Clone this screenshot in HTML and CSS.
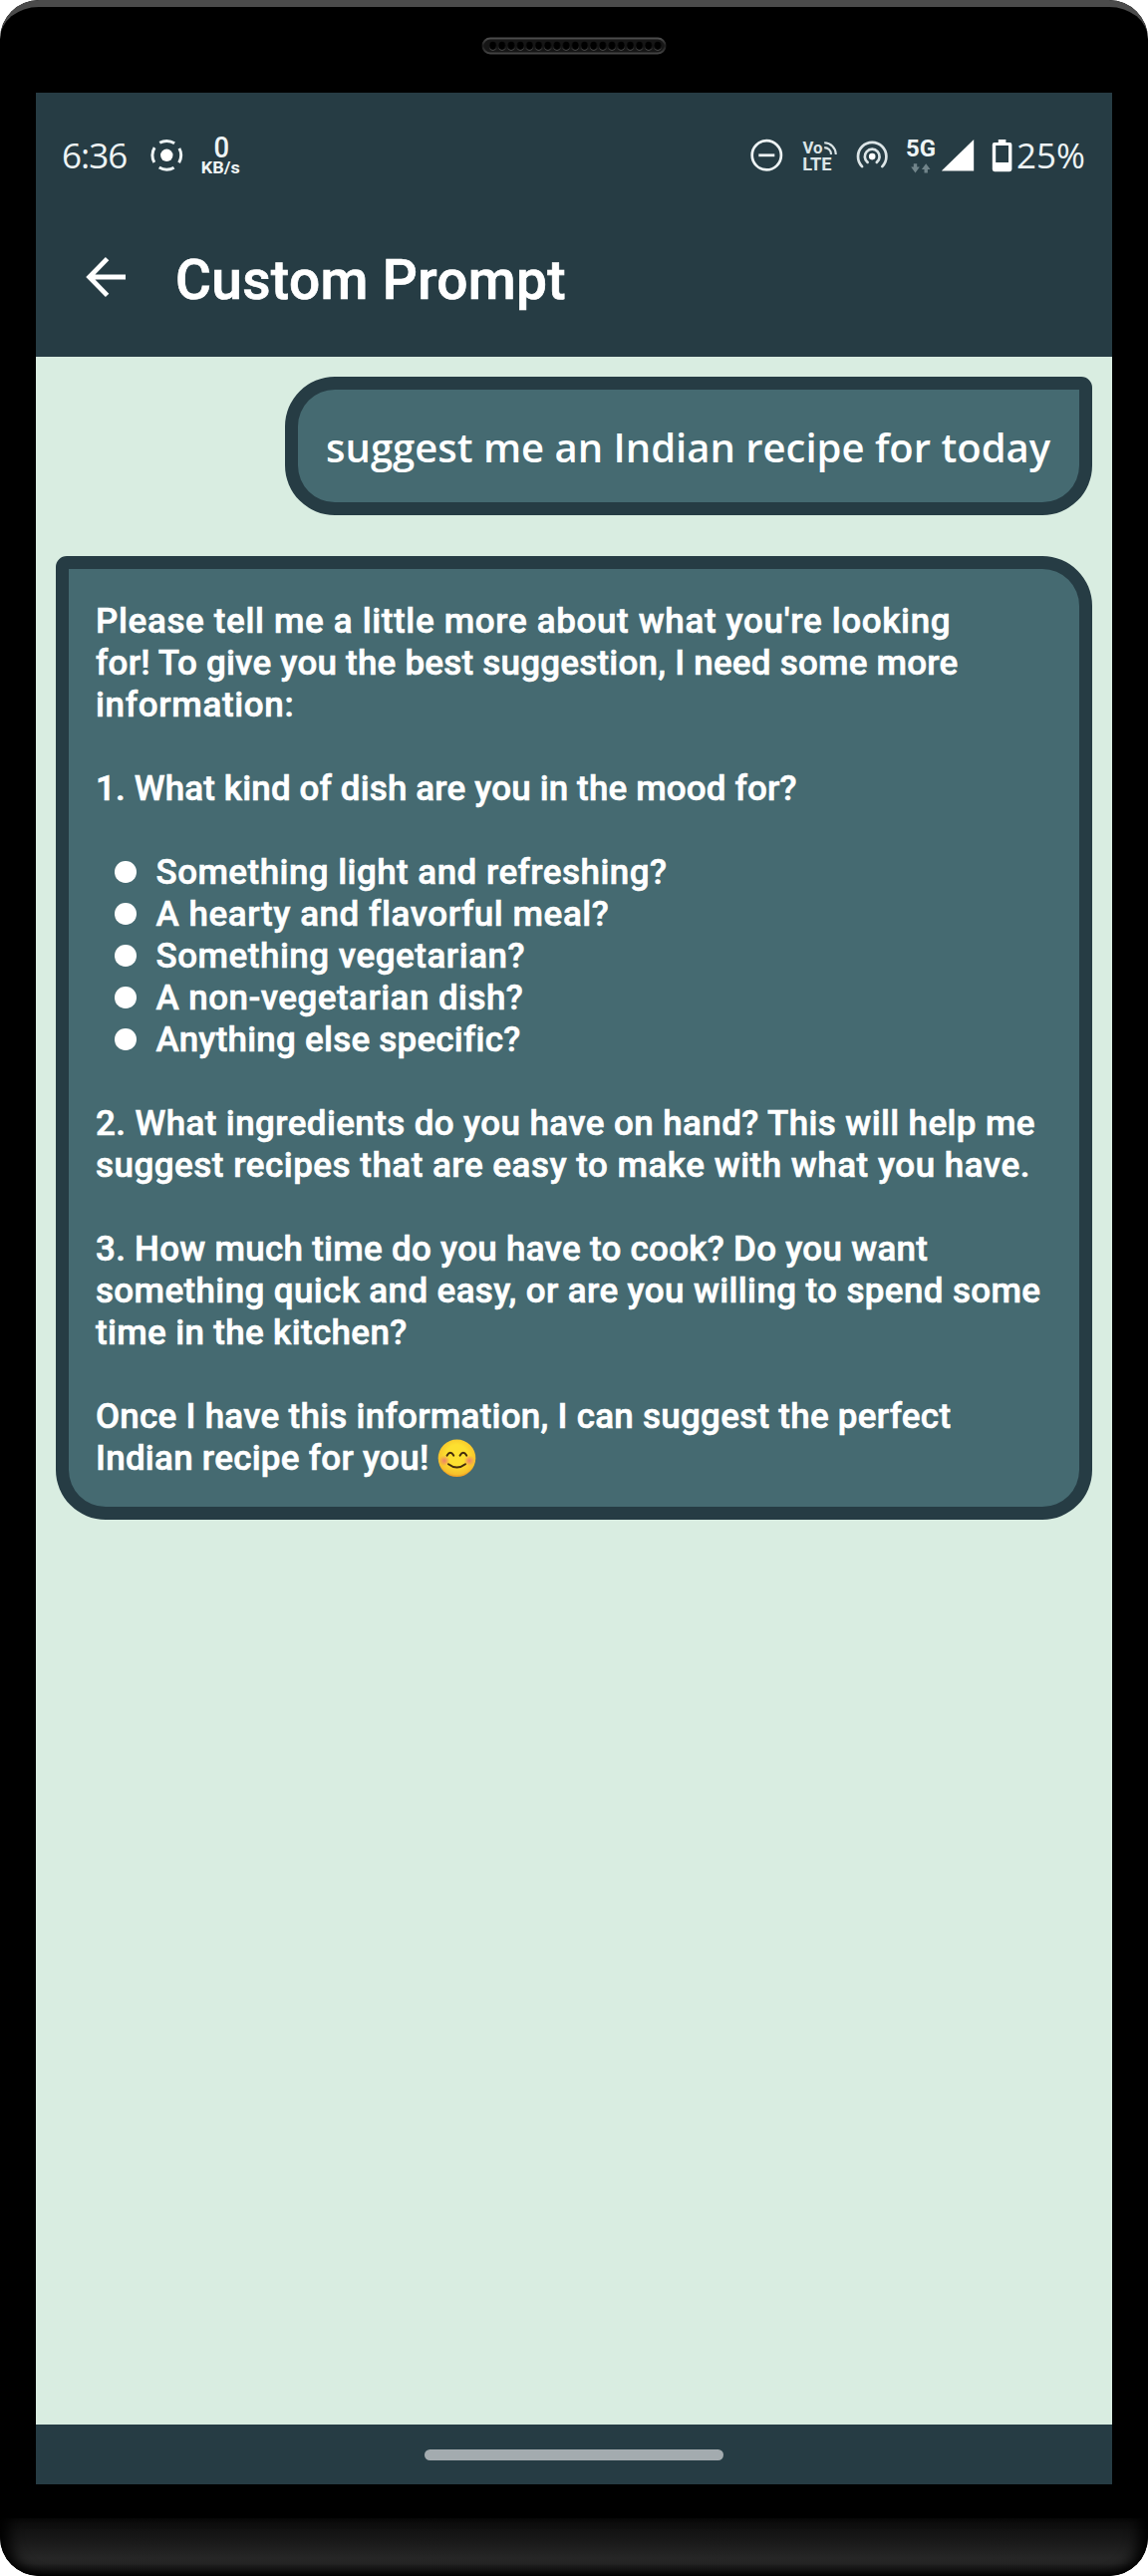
FILE: index.html
```
<!DOCTYPE html>
<html lang="en">
<head>
<meta charset="utf-8">
<title>Custom Prompt</title>
<link rel="stylesheet" href="styles.css">
</head>
<body>
<div class="phone">
  <div class="bezel-top">
    <svg class="speaker" width="186" height="18" viewBox="0 0 186 18">
      <defs>
        <linearGradient id="rim" x1="0" y1="0" x2="0" y2="1"><stop offset="0" stop-color="#4c4c4c"/><stop offset=".5" stop-color="#1c1c1c"/><stop offset="1" stop-color="#444"/></linearGradient>
        <pattern id="holes" x="7" y="0" width="9.19" height="18" patternUnits="userSpaceOnUse"><ellipse cx="4.6" cy="9.6" rx="3.6" ry="4.3" fill="#484848"/><ellipse cx="4.6" cy="8.8" rx="3.6" ry="4.1" fill="#000"/></pattern>
      </defs>
      <rect x="1.5" y="1.5" width="183" height="15" rx="7.5" fill="#161616" stroke="url(#rim)" stroke-width="2"/>
      <rect x="7" y="3" width="174.6" height="12" fill="url(#holes)"/>
    </svg>
  </div>
  <div class="screen">
    <header class="header">
      <div class="status">
        <span class="clock">6:36</span>
        <svg class="icon" width="50" height="44" viewBox="142 133.5 50 44">
          <circle cx="167.3" cy="155.3" r="6.2" fill="#fff"/>
          <circle cx="167.3" cy="155.3" r="14.4" fill="none" stroke="#eef4f5" stroke-width="3" stroke-dasharray="15.6 7.02" stroke-dashoffset="7.8"/>
        </svg>
        <svg class="icon" width="52" height="60" viewBox="192 125.5 52 60" font-family="Roboto" font-weight="700" fill="#eef4f5">
          <text x="214.6" y="157.6" font-size="29" font-weight="500" textLength="15.6" lengthAdjust="spacingAndGlyphs">0</text>
          <text x="201.8" y="173.8" font-size="16.5" textLength="39" lengthAdjust="spacingAndGlyphs">KB/s</text>
        </svg>
        <span class="spacer"></span>
        <svg class="icon" width="46" height="44" viewBox="750 133.5 46 44" fill="none" stroke="#eef4f5">
          <circle cx="769.3" cy="155.3" r="14.6" stroke-width="2.7"/><path d="M761.3 155.3h16" stroke-width="2.8"/>
        </svg>
        <svg class="icon" width="54" height="44" viewBox="796 133.5 54 44" font-family="Roboto" font-weight="700" fill="#dce5e7">
          <text x="805.4" y="153" font-size="15.6" textLength="20" lengthAdjust="spacingAndGlyphs">Vo</text>
          <text x="805.2" y="170.8" font-size="17.6" textLength="29.4" lengthAdjust="spacingAndGlyphs">LTE</text>
          <path d="M827.2 142.8a11.6 11.6 0 0 1 11.6 11.6M827.2 147.6a6.8 6.8 0 0 1 6.8 6.8" fill="none" stroke="#dce5e7" stroke-width="2.1"/>
        </svg>
        <svg class="icon" width="50" height="44" viewBox="850 133.5 50 44" fill="none" stroke="#dce5e7" stroke-width="2.7" stroke-linecap="round">
          <circle cx="875.2" cy="156.6" r="3.3" fill="#fff" stroke="none"/>
          <path d="M870.6 162.4a7.4 7.4 0 1 1 9.2 0M865.1 166.6a14.2 14.2 0 1 1 20.2 0"/>
        </svg>
        <svg class="icon" width="42" height="44" viewBox="900 133.5 42 44" font-family="Roboto" font-weight="700" fill="#eef4f5">
          <text x="909" y="156.3" font-size="23" textLength="30" lengthAdjust="spacingAndGlyphs">5G</text>
          <path d="M916.8 163.7h3.4v3.4h2.6l-4.3 5.9-4.3-5.9h2.6zM927.5 173v-3.4h-2.6l4.3-5.9 4.3 5.9h-2.6v3.4z" fill="#71848a"/>
        </svg>
        <svg class="icon" width="44" height="44" viewBox="942 133.5 44 44"><path d="M944.8 171l32.4-31.6V171z" fill="#fff"/></svg>
        <svg class="icon" width="34" height="44" viewBox="986 133.5 34 44">
          <path fill="#fff" fill-rule="evenodd" d="M1001.8 139.4h7.6v3h3.8q2.2 0 2.2 2.2v25q0 2.1-2.2 2.1h-15.2q-2.2 0-2.2-2.1v-25q0-2.2 2.2-2.2h3.8zM999.2 145.6V162.6h12.8V145.6z"/>
        </svg>
        <span class="percent">25%</span>
      </div>
      <div class="appbar">
        <svg class="back" width="46" height="46" viewBox="83 255 46 46" fill="none" stroke="#fff" stroke-width="4.8"><path d="M126 278H89.5M107.6 259.6L89.6 278l18 18.4"/></svg>
        <h1 class="title">Custom Prompt</h1>
      </div>
    </header>
    <main class="chat">
      <div class="bubble user">suggest me an Indian recipe for today</div>
      <div class="bubble bot">
        <div class="para">
          <div class="line a1">Please tell me a little more about what you're looking</div>
          <div class="line a2">for! To give you the best suggestion, I need some more</div>
          <div class="line a3">information:</div>
        </div>
        <div class="para"><div class="line b1">1. What kind of dish are you in the mood for?</div></div>
        <ul class="list">
          <li class="line c1">Something light and refreshing?</li>
          <li class="line c2">A hearty and flavorful meal?</li>
          <li class="line c3">Something vegetarian?</li>
          <li class="line c4">A non-vegetarian dish?</li>
          <li class="line c5">Anything else specific?</li>
        </ul>
        <div class="para">
          <div class="line d1">2. What ingredients do you have on hand? This will help me</div>
          <div class="line d2">suggest recipes that are easy to make with what you have.</div>
        </div>
        <div class="para">
          <div class="line e1">3. How much time do you have to cook? Do you want</div>
          <div class="line e2">something quick and easy, or are you willing to spend some</div>
          <div class="line e3">time in the kitchen?</div>
        </div>
        <div class="para">
          <div class="line f1">Once I have this information, I can suggest the perfect</div>
          <div class="line f2">Indian recipe for you!
            <svg width="39" height="39" viewBox="0 0 39 39">
              <defs>
                <radialGradient id="face" cx=".5" cy=".42" r=".56"><stop offset=".5" stop-color="#fde030"/><stop offset=".92" stop-color="#f7c02b"/><stop offset="1" stop-color="#f0a223"/></radialGradient>
                <radialGradient id="blush"><stop offset="0" stop-color="#ed7770" stop-opacity=".9"/><stop offset="1" stop-color="#ed7770" stop-opacity="0"/></radialGradient>
              </defs>
              <circle cx="19.5" cy="19.3" r="18.8" fill="url(#face)"/>
              <circle cx="7" cy="21.8" r="5.4" fill="url(#blush)"/><circle cx="32" cy="21.8" r="5.4" fill="url(#blush)"/>
              <path d="M9.6 16.6q3.3-5.6 6.6 0M22.6 16.6q3.3-5.6 6.6 0M11 25.2q8.5 6.6 17 0" fill="none" stroke="#422b0d" stroke-width="2" stroke-linecap="round"/>
            </svg>
          </div>
        </div>
      </div>
    </main>
    <footer class="nav"><span class="pill"></span></footer>
  </div>
  <div class="bezel-gap"></div>
  <div class="bezel-bottom"></div>
</div>
</body>
</html>
```
FILE: styles.css
```
* { box-sizing: border-box; }
body { margin: 0; background: #fff; font-family: Roboto, sans-serif; color: #fff; }

.phone {
  display: flex;
  flex-direction: column;
  width: 1152px;
  height: 2585px;
  background: #000;
  border-radius: 39px;
  overflow: hidden;
}
.bezel-top {
  display: flex;
  justify-content: center;
  flex: none;
  height: 93px;
  padding-top: 30px;
  border-top: 7px solid #4b4b4b;
  border-radius: 39px 39px 0 0;
}
.speaker { margin-right: 1px; }
.screen {
  display: flex;
  flex-direction: column;
  height: 2400px;
  margin: 0 36px;
  background: #d9ede1;
}
.bezel-gap { height: 34px; }
.bezel-bottom {
  height: 58px;
  border-radius: 0 0 39px 39px;
  background: linear-gradient(#0b0b0b, #191919 40%, #262626 68%, #242424 78%, #0c0c0c 95%, #000);
  box-shadow: inset 14px 0 14px -5px #000, inset -14px 0 14px -5px #000;
}

.header { height: 265px; background: #263c44; }
.status {
  display: flex;
  align-items: center;
  height: 125px;
  padding: 0 25px 0 26px;
  font-family: "Open Sans", sans-serif;
  font-size: 35px;
  color: #eef4f5;
}
.icon { flex: none; }
.clock { width: 80px; letter-spacing: -1px; }
.spacer { flex: 1; }
.percent { width: 71px; }
.appbar { display: flex; align-items: center; height: 127px; padding-left: 47px; }
.back { margin-top: -7px; }
.title {
  margin: -1px 0 0 47px;
  font-size: 55px;
  font-weight: 500;
  letter-spacing: 0.35px;
  -webkit-text-stroke: 0.7px #fff;
}

.chat { flex: 1; display: flex; flex-direction: column; align-items: flex-end; padding: 20px; }
.bubble { background: #456a71; border: 13px solid #263c44; white-space: nowrap; }
.user {
  width: 810px;
  height: 139px;
  padding: 28px 0 0 28px;
  border-radius: 50px 11px 50px 50px;
  font-family: "Open Sans", sans-serif;
  font-size: 40px;
  font-weight: 600;
  line-height: 60px;
}
.bot {
  display: flex;
  flex-direction: column;
  gap: 42px;
  width: 1040px;
  height: 967px;
  margin-top: 41px;
  padding: 32px 0 0 27px;
  border-radius: 11px 50px 50px 50px;
  font-size: 35px;
  font-weight: 500;
  line-height: 42px;
  -webkit-text-stroke: 0.6px #fff;
}
.list { margin: 0; padding: 0 0 0 19px; list-style: none; }
.list .line { display: flex; align-items: center; gap: 20px; }
.list .line::before { content: ""; width: 21.5px; height: 21.5px; margin-top: -2px; border-radius: 50%; background: #fff; }

/* per-line tracking keeps each line at its measure */
.a1 { letter-spacing: 0.64px; }
.a2 { letter-spacing: 0.21px; }
.a3 { letter-spacing: 0.65px; }
.b1 { letter-spacing: 0.13px; }
.c1 { letter-spacing: 0.44px; }
.c2 { letter-spacing: 0.55px; }
.c3 { letter-spacing: 0.5px; }
.c4 { letter-spacing: 0.44px; }
.c5 { letter-spacing: 0.22px; }
.d1 { letter-spacing: 0.38px; }
.d2 { letter-spacing: 0.49px; }
.e1 { letter-spacing: 0.26px; }
.e2 { letter-spacing: 0.36px; }
.e3 { letter-spacing: 0.33px; }
.f1 { letter-spacing: 0.25px; }
.f2 { display: flex; align-items: center; gap: 9px; letter-spacing: 0.25px; }
.f2 svg { margin-top: -2px; }

.nav { display: flex; align-items: center; justify-content: center; height: 60px; background: #263c44; }
.pill { width: 300px; height: 11px; border-radius: 6px; background: #a3abaf; }
```
